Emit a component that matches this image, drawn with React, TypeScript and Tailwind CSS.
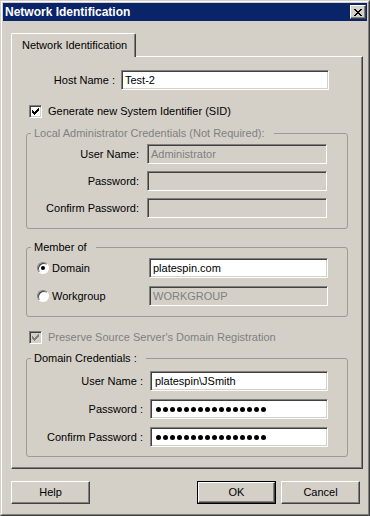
import React from "react";

const sunken =
  "border border-t-[#808080] border-l-[#808080] border-b-white border-r-white shadow-[inset_1px_1px_#404040,inset_-1px_-1px_#d4d0c8]";
const raised =
  "border border-t-white border-l-white border-b-[#404040] border-r-[#404040] shadow-[inset_-1px_-1px_#808080]";

function cx(...c: (string | false | undefined)[]) {
  return c.filter(Boolean).join(" ");
}

function Field({
  value,
  disabled,
  password,
  className,
}: {
  value?: string;
  disabled?: boolean;
  password?: boolean;
  className: string;
}) {
  return (
    <div
      className={cx(
        "h-[20px] flex items-center pl-[3px] whitespace-nowrap",
        sunken,
        disabled ? "bg-[#d4d0c8] text-[#808080]" : "bg-white text-black",
        className
      )}
    >
      {password ? (
        <div className="flex gap-[2px] pl-[1px]" aria-label="password">
          {Array.from({ length: 16 }).map((_, i) => (
            <span key={i} className="w-[5px] h-[5px] rounded-full bg-black" />
          ))}
        </div>
      ) : (
        value
      )}
    </div>
  );
}

// classic 7x7 check mark, columns of 3px
const checkCols = [2, 3, 4, 3, 2, 1, 0];

function Checkbox({ disabled }: { disabled?: boolean }) {
  return (
    <span
      className={cx(
        "w-[13px] h-[13px] shrink-0 flex items-center justify-center",
        sunken,
        disabled ? "bg-[#d4d0c8]" : "bg-white"
      )}
    >
      <svg width="7" height="7" viewBox="0 0 7 7" shapeRendering="crispEdges" fill={disabled ? "#808080" : "#000"}>
        {checkCols.map((y, x) => (
          <rect key={x} x={x} y={y} width="1" height="3" />
        ))}
      </svg>
    </span>
  );
}

function Radio({ checked }: { checked?: boolean }) {
  return (
    <span className="w-[12px] h-[12px] shrink-0 rounded-full bg-white border border-t-[#808080] border-l-[#808080] border-b-white border-r-white shadow-[inset_1px_1px_#404040] flex items-center justify-center">
      {checked && <span className="w-[4px] h-[4px] rounded-full bg-black" />}
    </span>
  );
}

function Button({ label, isDefault }: { label: string; isDefault?: boolean }) {
  return (
    <button
      className={cx(
        "w-[79px] h-[23px] bg-[#d4d0c8]",
        isDefault ? "border border-black" : ""
      )}
    >
      <div className={cx("h-full flex items-center justify-center", raised)}>{label}</div>
    </button>
  );
}

function GroupBox({
  title,
  disabled,
  className,
  children,
}: {
  title: string;
  disabled?: boolean;
  className: string;
  children: React.ReactNode;
}) {
  return (
    <fieldset
      className={cx(
        "ml-[14px] w-[322px] border border-[#9d9b95] rounded-[3px] flex flex-col",
        className
      )}
    >
      <legend
        className={cx(
          "ml-[4px] pl-[3px] pr-[9px] leading-[13px]",
          disabled ? "text-[#808080]" : "text-black"
        )}
      >
        {title}
      </legend>
      {children}
    </fieldset>
  );
}

function CloseGlyph() {
  const rows = [0, 1, 2, 3, 4, 5, 6];
  return (
    <svg width="8" height="7" viewBox="0 0 8 7" shapeRendering="crispEdges" fill="#000">
      {rows.map((r) => {
        const d = Math.min(r, 6 - r);
        return (
          <g key={r}>
            <rect x={d} y={r} width="2" height="1" />
            <rect x={6 - d} y={r} width="2" height="1" />
          </g>
        );
      })}
    </svg>
  );
}

export default function App() {
  return (
    <div className="w-[370px] h-[516px] bg-[#d4d0c8] font-['Liberation_Sans',Arial,sans-serif] text-[11px] text-black border border-t-[#d4d0c8] border-l-[#d4d0c8] border-r-[#404040] border-b-[#404040]">
      <div className="h-full border border-t-white border-l-white border-r-[#808080] border-b-[#808080] p-[1px] flex flex-col">
        {/* Title bar */}
        <div className="h-[18px] bg-[#0a246a] flex items-center justify-between pl-[2px] pr-[1px]">
          <span className="text-white font-bold text-[12px] leading-none">Network Identification</span>
          <button className={cx("w-[16px] h-[14px] bg-[#d4d0c8] flex items-center justify-center", raised)}>
            <CloseGlyph />
          </button>
        </div>

        <div className="pl-[8px] pt-[12px] flex flex-col">
          {/* Tab */}
          <div className="relative z-10 -mb-[1px] w-[125px] h-[24px] bg-[#d4d0c8] border-t border-l border-t-white border-l-white border-r border-r-[#404040] shadow-[inset_-1px_0_#808080] rounded-t-[2px] pl-[10px] pb-[1px] flex items-center">
            Network Identification
          </div>

          {/* Panel */}
          <div className="w-[352px] h-[413px] border border-t-white border-l-white border-r-[#404040] border-b-[#404040] shadow-[inset_-1px_-1px_#808080] flex flex-col pt-[13px]">
            <div className="flex items-center">
              <span className="w-[103px] text-right">Host Name :</span>
              <Field value="Test-2" className="ml-[6px] w-[208px]" />
            </div>

            <div className="flex items-center mt-[15px] ml-[17px] h-[13px]">
              <Checkbox />
              <span className="ml-[6px]">Generate new System Identifier (SID)</span>
            </div>

            <GroupBox title="Local Administrator Credentials (Not Required):" disabled className="mt-[9px] pt-[4px] pb-[10px] gap-[7px]">
              {[
                ["User Name:", "Administrator"],
                ["Password:", ""],
                ["Confirm Password:", ""],
              ].map(([label, value]) => (
                <div key={label} className="flex items-center">
                  <span className="w-[112px] text-right">{label}</span>
                  <Field value={value} disabled className="ml-[8px] w-[180px] h-[19px]" />
                </div>
              ))}
            </GroupBox>

            <GroupBox title="Member of" className="mt-[12px] pt-[4px] pb-[10px] gap-[8px]">
              <div className="flex items-center">
                <div className="w-[122px] flex items-center pl-[10px]">
                  <Radio checked />
                  <span className="ml-[3px]">Domain</span>
                </div>
                <Field value="platespin.com" className="w-[179px]" />
              </div>
              <div className="flex items-center">
                <div className="w-[122px] flex items-center pl-[10px]">
                  <Radio />
                  <span className="ml-[3px]">Workgroup</span>
                </div>
                <Field value="WORKGROUP" disabled className="w-[179px]" />
              </div>
            </GroupBox>

            <div className="flex items-center mt-[14px] ml-[17px] h-[13px]">
              <Checkbox disabled />
              <span className="ml-[6px] text-[#808080]">Preserve Source Server's Domain Registration</span>
            </div>

            <GroupBox title="Domain Credentials :" className="mt-[8px] pt-[6px] pb-[9px] gap-[8px]">
              <div className="flex items-center">
                <span className="w-[116px] text-right">User Name :</span>
                <Field value="platespin\JSmith" className="ml-[7px] w-[178px] pl-[4px]" />
              </div>
              <div className="flex items-center">
                <span className="w-[116px] text-right">Password :</span>
                <Field password className="ml-[7px] w-[178px] pl-[4px]" />
              </div>
              <div className="flex items-center">
                <span className="w-[116px] text-right">Confirm Password :</span>
                <Field password className="ml-[7px] w-[178px] pl-[4px]" />
              </div>
            </GroupBox>
          </div>

          {/* Buttons */}
          <div className="w-[349px] mt-[12px] flex items-center">
            <Button label="Help" />
            <div className="ml-auto flex gap-[5px]">
              <Button label="OK" isDefault />
              <Button label="Cancel" />
            </div>
          </div>
        </div>
      </div>
    </div>
  );
}
